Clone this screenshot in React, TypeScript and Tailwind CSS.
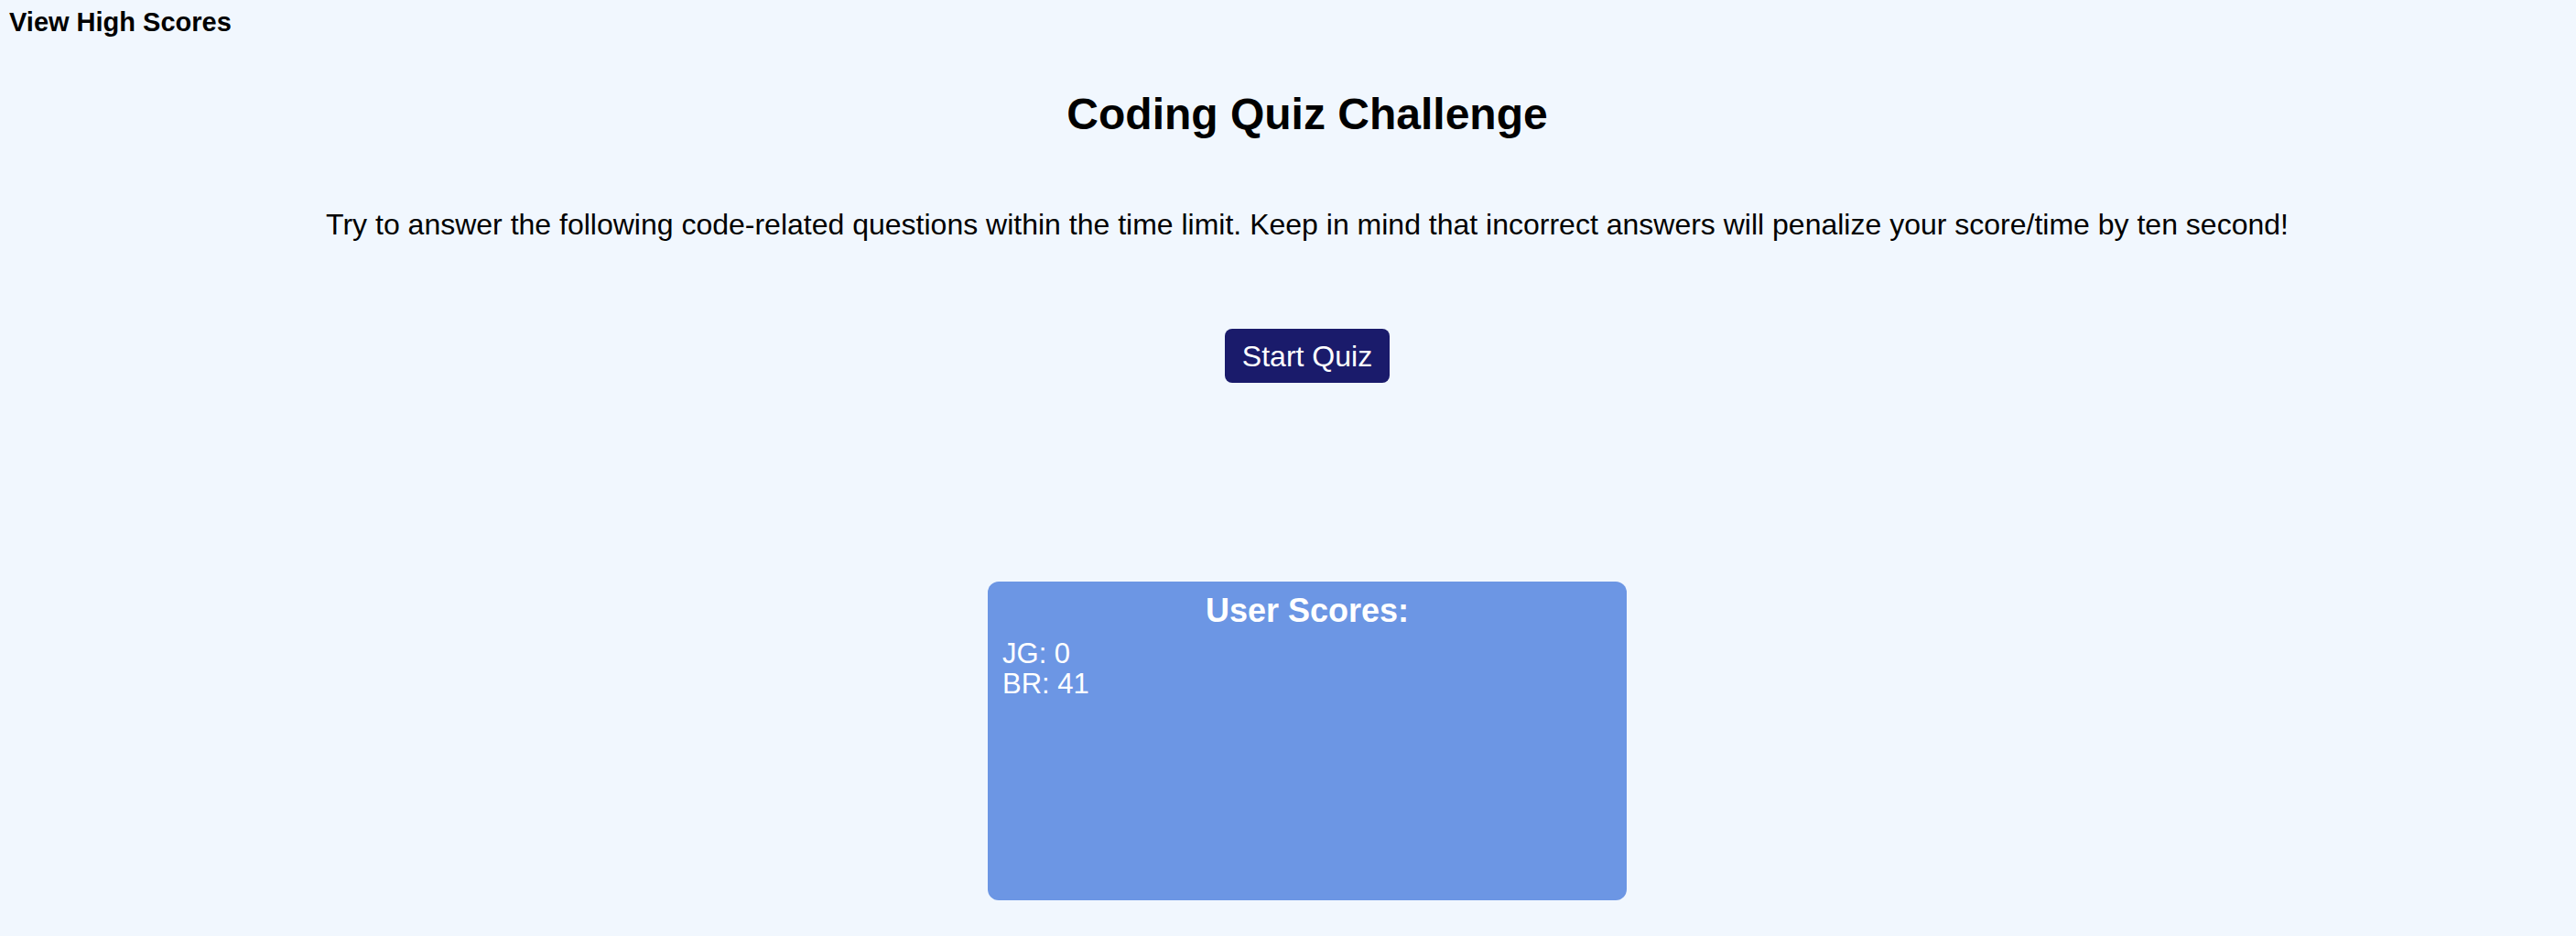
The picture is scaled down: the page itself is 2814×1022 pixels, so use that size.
import React from "react";

const scores = [
  { initials: "JG", score: 0 },
  { initials: "BR", score: 41 },
];

export default function App() {
  return (
    <div className="min-h-[1022px] w-full bg-[#F1F7FE] text-black [font-family:'Liberation_Sans',Arial,sans-serif]">
      <header className="px-[10px] pt-[8px]">
        <a className="text-[29px] font-bold leading-[32px]">View High Scores</a>
      </header>

      <main className="flex flex-col items-center pl-[42px]">
        <h1 className="mt-[56px] text-[48px] font-bold leading-[56px]">Coding Quiz Challenge</h1>

        <p className="mt-[74px] text-[32px] leading-[37px]">
          Try to answer the following code-related questions within the time limit. Keep in mind that incorrect
          answers will penalize your score/time by ten second!
        </p>

        <button className="mt-[95px] h-[59px] w-[180px] rounded-[8px] bg-[#1A1B6B] text-[32px] leading-[36px] text-white">
          Start Quiz
        </button>

        <section className="mt-[217px] flex h-[348px] w-[698px] flex-col rounded-[12px] bg-[#6C96E4] px-[16px] pt-[11px] text-white">
          <h2 className="text-center text-[36px] font-bold leading-[42px]">User Scores:</h2>
          <ul className="mt-[9px] text-[31px] leading-[33px]">
            {scores.map((s) => (
              <li key={s.initials}>
                {s.initials}: {s.score}
              </li>
            ))}
          </ul>
        </section>
      </main>
    </div>
  );
}
